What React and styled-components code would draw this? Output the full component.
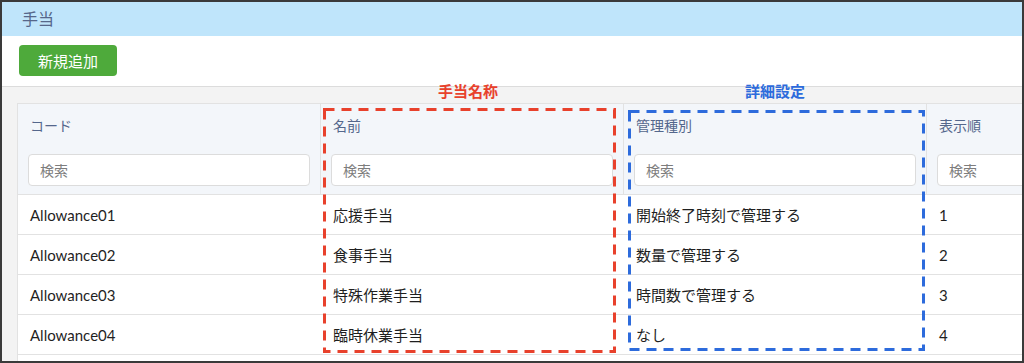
import React from 'react'
import styled, { createGlobalStyle } from 'styled-components'

const GlobalStyle = createGlobalStyle`
  html, body {
    margin: 0;
    padding: 0;
    background: #fff;
  }
  * {
    box-sizing: border-box;
  }
`;

const columns = [
  { key: 'code', label: 'コード' },
  { key: 'name', label: '名前' },
  { key: 'type', label: '管理種別' },
  { key: 'order', label: '表示順' },
];

const rows = [
  { code: 'Allowance01', name: '応援手当', type: '開始終了時刻で管理する', order: '1' },
  { code: 'Allowance02', name: '食事手当', type: '数量で管理する', order: '2' },
  { code: 'Allowance03', name: '特殊作業手当', type: '時間数で管理する', order: '3' },
  { code: 'Allowance04', name: '臨時休業手当', type: 'なし', order: '4' },
];

// dashed annotation frame drawn as svg so the dash length matches
function DashFrame({ color, left, top, width, height }) {
  return (
    <DashBox left={left} top={top} width={width} height={height}>
      <svg width={width} height={height}>
        <rect
          x="1.5"
          y="1.5"
          width={width - 3}
          height={height - 3}
          fill="none"
          stroke={color}
          strokeWidth="3"
          strokeDasharray="10 7"
        />
      </svg>
    </DashBox>
  )
}

export default function App() {
  return (
    <>
      <GlobalStyle />
      <Frame>
        <TitleBar>手当</TitleBar>
        <Toolbar>
          <AddButton>新規追加</AddButton>
        </Toolbar>
        <Content>
          <Table>
            <HeaderRow>
              {columns.map(col => (
                <HeaderCell key={col.key}>
                  <HeaderLabel>{col.label}</HeaderLabel>
                  <SearchInput placeholder="検索" />
                </HeaderCell>
              ))}
            </HeaderRow>
            {rows.map(row => (
              <Row key={row.code}>
                {columns.map(col => (
                  <Cell key={col.key}>{row[col.key]}</Cell>
                ))}
              </Row>
            ))}
          </Table>
          <Note color="#e8412c" left={436}>手当名称</Note>
          <Note color="#2d6bdc" left={743}>詳細設定</Note>
          <DashFrame color="#e8412c" left={321} top={21} width={293} height={245} />
          <DashFrame color="#2d6bdc" left={626} top={23} width={297} height={241} />
        </Content>
      </Frame>
    </>
  )
}

const Frame = styled.div`
  width: 1024px;
  height: 363px;
  border: 2px solid #3a3a3a;
  overflow: hidden;
  display: flex;
  flex-direction: column;
  font-family: Lato, "Noto Sans CJK JP", sans-serif;
  background: #fff;
`;

const TitleBar = styled.div`
  height: 34px;
  flex: none;
  background: #bfe5fb;
  color: #56678a;
  font-size: 16px;
  line-height: 34px;
  padding-left: 20px;
`;

const Toolbar = styled.div`
  height: 51px;
  flex: none;
  padding: 9px 0 0 17px;
  border-bottom: 1px solid #dcdcdc;
  background: #fff;
`;

const AddButton = styled.button`
  width: 98px;
  height: 31px;
  border: none;
  border-radius: 4px;
  background: #4eaa3b;
  color: #fff;
  font-family: inherit;
  font-size: 15px;
  padding: 0;
  cursor: pointer;
`;

const Content = styled.div`
  position: relative;
  flex: 1;
  display: flex;
  background: #f3f3f3;
  padding: 16px 0 0 15px;
`;

const Table = styled.div`
  flex: none;
  width: 1240px;
  background: #fff;
  border-left: 1px solid #e2e2e2;
  border-top: 1px solid #e2e2e2;
`;

const HeaderRow = styled.div`
  display: grid;
  grid-template-columns: repeat(4, 303px) 1fr;
  background: #f3f6fa;
  border-bottom: 1px solid #e2e2e2;
`;

const HeaderCell = styled.div`
  padding: 12px 10px 8px;
  border-right: 1px solid #e2e2e2;
`;

const HeaderLabel = styled.div`
  color: #54678c;
  font-size: 14px;
  line-height: 20px;
  height: 20px;
  padding-left: 2px;
  margin-bottom: 18px;
`;

const SearchInput = styled.input`
  display: block;
  width: 100%;
  height: 32px;
  border: 1px solid #dcdcdc;
  border-radius: 4px;
  background: #fff;
  padding: 0 11px;
  font-family: inherit;
  font-size: 14px;
  color: #333;
  outline: none;
  &::placeholder {
    color: #7d7d7d;
  }
`;

const Row = styled.div`
  display: grid;
  grid-template-columns: repeat(4, 303px) 1fr;
  height: 40px;
  border-bottom: 1px solid #e2e2e2;
`;

const Cell = styled.div`
  display: flex;
  align-items: center;
  padding-left: 12px;
  font-size: 15px;
  color: #1f1f1f;
  white-space: nowrap;
`;

const Note = styled.div`
  position: absolute;
  top: -6px;
  left: ${p => p.left}px;
  color: ${p => p.color};
  font-size: 15px;
  font-weight: 700;
  line-height: 20px;
`;

const DashBox = styled.div`
  position: absolute;
  left: ${p => p.left}px;
  top: ${p => p.top}px;
  width: ${p => p.width}px;
  height: ${p => p.height}px;
  pointer-events: none;
  svg {
    display: block;
  }
`;
